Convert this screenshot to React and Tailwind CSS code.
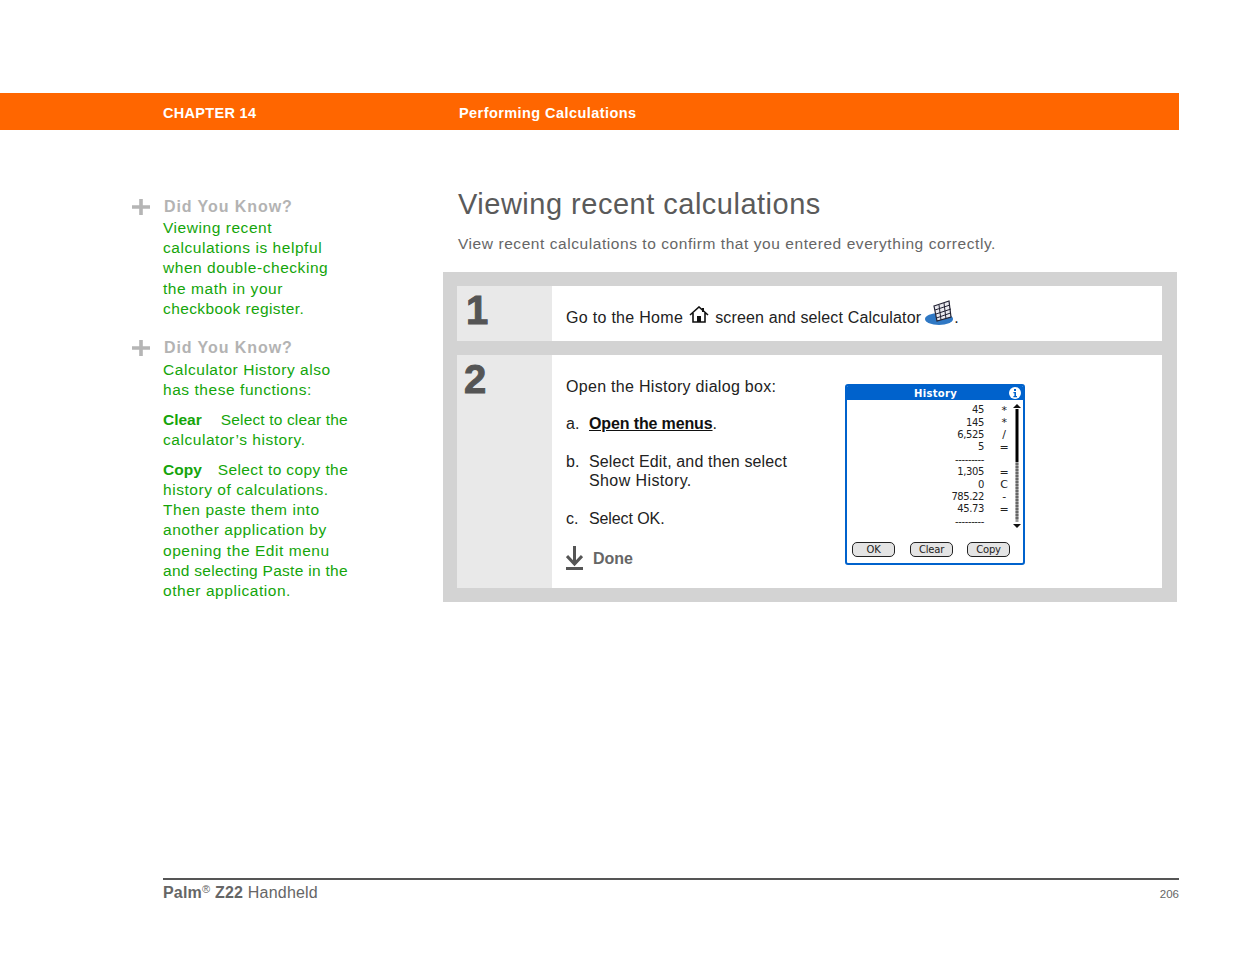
function Tip({ children }) {
  return (
    <div className="flex">
      <div className="w-[32px] pt-[2px] pl-[1px] shrink-0">
        <svg width="18" height="16" viewBox="0 0 18 16"><path d="M0 6.200h18v3.600H0zM7.200 0h3.600v16H7.200z" fill="#b5b5b5" /></svg>
      </div>
      <div className="w-[200px]">
        <div className="text-[16px] leading-[20px] font-bold text-[#b3b3b3] tracking-[0.92px] pl-[1px]">Did You Know?</div>
        {children}
      </div>
    </div>
  );
}
function Row({ n, o }) {
  return (
    <div className="flex h-[12.4px] items-center">
      <div className="w-[137px] shrink-0 text-right">{n}</div>
      <div className="w-[16px] ml-[12px] shrink-0 text-center text-[11px]">{o}</div>
    </div>
  );
}
function PalmBtn({ children, cls }) {
  return <div className={"h-[15px] w-[43px] rounded-[5px] border border-[#222] bg-[#e4e4e4] flex items-center justify-center text-[10px] tracking-[-0.2px] text-[#222] " + cls}>{children}</div>;
}
function HistoryShot() {
  return (
    <div className="w-[180px] h-[181px] mt-[7px] border-2 border-[#0062cc] rounded-[3px] bg-white flex flex-col font-['DejaVu_Sans',sans-serif] overflow-hidden">
      <div className="h-[14px] bg-[#0062cc] flex items-center text-white text-[10px] font-bold shrink-0">
        <div className="w-[162px] text-center pl-[15px] tracking-[0.3px]">History</div>
        <svg width="12" height="12" viewBox="0 0 12 12"><circle cx="6" cy="6" r="6" fill="#fff" /><path d="M5 2h2v2H5zM4.400 5H7v4h1v1.200H4.400V9h1V6.200h-1z" fill="#0062cc" /></svg>
      </div>
      <div className="flex pt-[4px] h-[142px]">
        <div className="text-[10px] leading-none text-[#222] tracking-[-0.4px] w-[165px] shrink-0">
          <Row n="45" o="*" /><Row n="145" o="*" /><Row n="6,525" o="/" /><Row n="5" o="=" />
          <Row n="---------" o="" />
          <Row n="1,305" o="=" /><Row n="0" o="C" /><Row n="785.22" o="-" /><Row n="45.73" o="=" />
          <Row n="---------" o="" />
        </div>
        <svg width="10" height="124" viewBox="0 0 10 124" className="shrink-0">
          <path d="M5 0l4 4H1zM5 124l-4-4h8z" fill="#111" />
          <rect x="3.500" y="5" width="3" height="53" fill="#000" />
          <rect x="3.500" y="58" width="3" height="60" fill="#999" />
          <path d="M3.500 60h3M3.500 63h3M3.500 66h3M3.500 69h3M3.500 72h3M3.500 75h3M3.500 78h3M3.500 81h3M3.500 84h3M3.500 87h3M3.500 90h3M3.500 93h3M3.500 96h3M3.500 99h3M3.500 102h3M3.500 105h3M3.500 108h3M3.500 111h3M3.500 114h3" stroke="#333" strokeWidth="1" />
        </svg>
      </div>
      <div className="flex pl-[5px]">
        <PalmBtn>OK</PalmBtn>
        <PalmBtn cls="ml-[15px]">Clear</PalmBtn>
        <PalmBtn cls="ml-[14px]">Copy</PalmBtn>
      </div>
    </div>
  );
}
export default function App() {
  return (
    <div className="w-[1235px] h-[954px] bg-white overflow-hidden flex flex-col font-['Liberation_Sans',Arial,sans-serif]">
      <div className="mt-[93px] w-[1179px] h-[37px] bg-[#ff6600] flex items-center text-white text-[14.5px] font-bold pl-[163px] pt-[5px] shrink-0">
        <div className="w-[296px] tracking-[0.3px]">CHAPTER 14</div>
        <div className="tracking-[0.43px]">Performing Calculations</div>
      </div>

      <div className="flex h-[748px] shrink-0">
        <div className="w-[443px] pl-[131px] pt-[67px] shrink-0">
          <Tip>
            <div className="mt-[1px] text-[15.5px] leading-[20.2px] text-[#14a50a] tracking-[0.55px]">
              Viewing recent<br />calculations is helpful<br />when double-checking<br />the math in your<br /><span className="tracking-[0.4px]">checkbook register.</span>
            </div>
          </Tip>
          <div className="h-[19px]" />
          <Tip>
            <div className="mt-[2px] text-[15.5px] leading-[20.2px] text-[#14a50a] tracking-[0.55px]">
              Calculator History also<br />has these functions:
              <div className="mt-[9.5px]"><b className="tracking-[0px]">Clear</b><span className="ml-[19px] tracking-[0.15px]">Select to clear the</span><br />calculator’s history.</div>
              <div className="mt-[9.5px]"><b className="tracking-[0px]">Copy</b><span className="ml-[16px] tracking-[0.4px]">Select to copy the</span><br />history of calculations.<br />Then paste them into<br />another application by<br />opening the Edit menu<br /><span className="tracking-[0.28px]">and selecting Paste in the</span><br />other application.</div>
            </div>
          </Tip>
        </div>

        <div className="flex-1 pt-[56px]">
          <h1 className="pl-[15px] text-[29px] leading-[36px] font-normal text-[#5a5a5a] tracking-[0.5px]">Viewing recent calculations</h1>
          <p className="pl-[15px] mt-[12px] text-[15.5px] leading-[20px] text-[#666] tracking-[0.56px]">View recent calculations to confirm that you entered everything correctly.</p>
          <div className="mt-[18px] w-[734px] h-[330px] bg-[#d3d3d3] pl-[14px] pr-[15px] pt-[14px] pb-[14px] flex flex-col gap-[14px]">
            <div className="flex h-[55px] bg-white">
              <div className="w-[95px] bg-[#e9e9e9] pl-[9px] pt-[2px] text-[40px] leading-[44px] font-bold text-[#555] [-webkit-text-stroke:1px_#555]">1</div>
              <div className="flex-1 pl-[14px] pt-[22px] text-[16px] leading-[20px] text-[#222] tracking-[0.3px] flex items-start">
                <span>Go to the Home</span>
                <svg width="20" height="18" viewBox="0 0 20 18" className="ml-[6px] mt-[-2px]">
                  <path d="M1 9l9-8 9 8M4 7v9h12V7" fill="none" stroke="#111" strokeWidth="1.600" />
                  <path d="M13 2h2v4h-2z" fill="#111" /><rect x="8" y="10" width="4" height="6" fill="#111" />
                </svg>
                <span className="ml-[6px] tracking-[0.15px]">screen and select Calculator</span>
                <svg width="30" height="26" viewBox="0 0 30 26" className="ml-[4px] mt-[-8px]">
                  <ellipse cx="14" cy="19" rx="14" ry="6" fill="#2f78c4" />
                  <path d="M9 6l15-5 2 16-14 4z" fill="#e8e8ee" stroke="#223" strokeWidth="1.200" />
                  <path d="M10 10l15-5M11 14l15-5M11.500 18l14-5M14 5l2 15M19 3l2 16" stroke="#223" strokeWidth="1" fill="none" />
                </svg>
                <span className="ml-[-1px]">.</span>
              </div>
            </div>
            <div className="flex h-[233px] bg-white">
              <div className="w-[95px] bg-[#e9e9e9] pl-[7px] pt-[2px] text-[40px] leading-[44px] font-bold text-[#555] [-webkit-text-stroke:1px_#555]">2</div>
              <div className="flex-1 flex pl-[14px] pt-[22px] text-[16px] leading-[19px] text-[#222] tracking-[0.3px]">
                <div className="w-[279px] shrink-0">
                  <div>Open the History dialog box:</div>
                  <div className="flex mt-[18px]"><span className="w-[23px] tracking-[0.1px]">a.</span><span className="tracking-[-0.13px]"><b className="underline text-[#111]">Open the menus</b>.</span></div>
                  <div className="flex mt-[19px]"><span className="w-[23px] tracking-[0.1px]">b.</span><span className="tracking-[0.15px]">Select Edit, and then select<br /><span className="tracking-[0.4px]">Show History.</span></span></div>
                  <div className="flex mt-[19px]"><span className="w-[23px] tracking-[0.1px]">c.</span><span className="tracking-[-0.1px]">Select OK.</span></div>
                  <div className="flex items-center mt-[18px] text-[#666] font-bold tracking-[0px]">
                    <svg width="17" height="24" viewBox="0 0 17 24"><path d="M8.500 0v18M1 10l7.500 8 7.500-8" fill="none" stroke="#555" strokeWidth="3" /><rect y="21" width="17" height="3" fill="#555" /></svg>
                    <span className="ml-[10px]">Done</span>
                  </div>
                </div>
                <HistoryShot />
              </div>
            </div>
          </div>
        </div>
      </div>

      <div className="ml-[163px] w-[1016px] border-t-2 border-[#555] flex justify-between items-start pt-[3px] text-[#666]">
        <div className="text-[16px] leading-[20px] tracking-[0.2px]"><b>Palm<sup className="text-[11px] font-normal">®</sup> Z22</b> Handheld</div>
        <div className="text-[11.500px] leading-[20px] pt-[1px]">206</div>
      </div>
    </div>
  );
}
